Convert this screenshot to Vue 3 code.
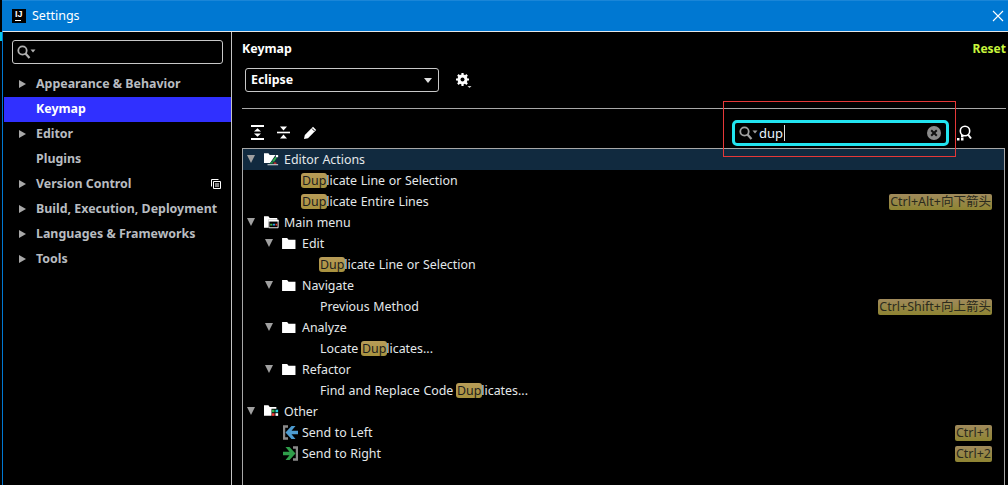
<template>
  <div class="window">
    <header class="titlebar">
      <span class="app-logo"><b>IJ</b><i></i></span>
      <span class="title">Settings</span>
      <svg class="close" width="12" height="12" viewBox="0 0 12 12"><path d="M1 1l10 10M11 1L1 11" stroke="#fff" stroke-width="1.1" fill="none" /></svg>
    </header>
    <div class="body">
      <aside class="sidebar">
        <div class="side-search">
          <svg width="19" height="15" viewBox="0 0 19 15"><circle cx="5.500" cy="5.500" r="4.200" fill="none" stroke="#b0b0b0" stroke-width="1.800" /><path d="M8.500 8.500l4 4.500" stroke="#b0b0b0" stroke-width="2.200" /><path d="M13.500 4.500h5l-2.500 3z" fill="#b0b0b0" /></svg>
        </div>
        <div v-for="item in navItems" :key="item.label" class="nav-row" :class="{ active: item.active }">
          <span class="nav-arrow" :class="{ hidden: !item.arrow }"></span>
          <span class="nav-label">{{ item.label }}</span>
          <svg v-if="item.copy" class="nav-copy" width="10" height="10" viewBox="0 0 10 10"><path d="M.5 7.500V.5h7M2.500 2.500h7v7h-7zM4 5h4M4 7h4" fill="none" stroke="#fff" /></svg>
        </div>
      </aside>
      <main class="content">
        <div class="heading">
          <span class="heading-title">Keymap</span>
          <span class="reset">Reset</span>
        </div>
        <div class="scheme">
          <div class="combo">
            <span>Eclipse</span>
            <i class="combo-arrow"></i>
          </div>
          <svg class="gear" width="17" height="17" viewBox="0 0 17 17">
            <circle cx="7.500" cy="7.500" r="3.700" fill="none" stroke="#fff" stroke-width="2.600" />
            <path d="M7.500 1v13M1 7.500h13M2.900 2.900l9.200 9.200M12.100 2.900l-9.200 9.200" stroke="#fff" stroke-width="2.200" />
            <circle cx="7.500" cy="7.500" r="2" fill="#000" />
            <path d="M12.500 14h4l-2 2z" fill="#ccc" />
          </svg>
        </div>
        <div class="separator"></div>
        <div class="toolbar">
          <div class="tools">
            <svg width="13" height="15" viewBox="0 0 13 15"><path d="M0 0h13v2H0zM0 13h13v2H0z" fill="#fff" /><path d="M6.500 3.200l3.500 3.300H3zM6.500 11.800L3 8.500h7z" fill="#fff" /></svg>
            <svg width="13" height="15" viewBox="0 0 13 15"><path d="M0 6.700h13v1.600H0z" fill="#fff" /><path d="M3 1.500h7L6.500 5.500zM3 13.500h7L6.500 9.500z" fill="#fff" /></svg>
            <svg width="15" height="15" viewBox="0 0 15 15"><path d="M1 14l.8-4L10 1.800l3.200 3.200L5 13.200z" fill="#fff" /><path d="M9 3.500l2.500 2.500" stroke="#000" /></svg>
          </div>
          <div class="search-wrap">
            <div class="filter">
              <svg width="19" height="15" viewBox="0 0 19 15"><circle cx="5.500" cy="5.500" r="4.200" fill="none" stroke="#a0a0a0" stroke-width="1.800" /><path d="M8.500 8.500l4 4.500" stroke="#a0a0a0" stroke-width="2.200" /><path d="M13.500 4.500h5l-2.500 3z" fill="#a0a0a0" /></svg>
              <span class="filter-text">dup</span><i class="caret"></i>
              <svg class="clear" width="16" height="16" viewBox="0 0 16 16"><circle cx="8" cy="8" r="7" fill="#8a8a8a" /><path d="M5.200 5.200l5.600 5.600M10.800 5.200l-5.600 5.600" stroke="#111" stroke-width="2" /></svg>
            </div>
            <svg class="find-shortcut" width="16" height="16" viewBox="0 0 16 16"><circle cx="9" cy="6" r="4.700" fill="none" stroke="#fff" stroke-width="1.600" /><path d="M12 9.500l3 4" stroke="#fff" stroke-width="2" /><path d="M5 10h2.500v2.500H5zM1 13h2.500v2.500H1zM5 13h2.500v2.500H5z" fill="#fff" /></svg>
            <div class="annotation"></div>
          </div>
        </div>
        <div class="tree">
          <div v-for="row in rows" :key="row.id" class="tree-row" :class="[`indent-${row.indent}`, { selected: row.selected }]">
            <span class="tree-arrow" :class="{ hidden: !row.arrow }"></span>
            <svg v-if="row.icon === 'folder'" class="tree-icon" width="14" height="12" viewBox="0 0 15 13"><path d="M0 1h5.500l1.500 2h7.500v10H0z" fill="#fff" /></svg>
            <svg v-else-if="row.icon === 'editor'" class="tree-icon" width="15" height="14" viewBox="0 0 17 15"><path d="M0 1h5l1.500 2H13l-4 6-2 3H0z" fill="#fff" /><path d="M4 14h12" stroke="#fff" stroke-width="1" /><path d="M6 12.500h4v-2l-2 .500z" fill="#1c9c3c" /><path d="M9 10l4-5 1.500 1-3 4.500z" fill="#2fb24c" /><path d="M11 11.500h3v1.500h-3z" fill="#e5352b" /><path d="M13.500 3h2.500v2.500h-2.500z" fill="#fff" /></svg>
            <svg v-else-if="row.icon === 'menu'" class="tree-icon" width="15" height="14" viewBox="0 0 17 15"><path d="M0 1h5l1.500 2H15v2H5v9H0z" fill="#fff" /><path d="M5.500 5.500h10.500v8.500H5.500z" fill="#000" stroke="#fff" /><path d="M5 5h11.500v2H5z" fill="#fff" /><path d="M7 9.500h2.500v2H7z" fill="#3bb34a" /><path d="M10 9.500h2.500v2H10z" fill="#2a9ff0" /><path d="M13 9.500h2v2h-2z" fill="#e5352b" /></svg>
            <svg v-else-if="row.icon === 'other'" class="tree-icon" width="15" height="14" viewBox="0 0 17 15"><path d="M0 1h5l1.500 2H14v2H8.500v8H0z" fill="#fff" /><path d="M9 6h3v3H9z" fill="#2fb24c" /><path d="M13 6h3v3h-3z" fill="#2ad4e0" /><path d="M9 10h3v3H9z" fill="#f03a3a" /><path d="M13 10h3v3h-3z" fill="#fff" /></svg>
            <svg v-else-if="row.icon === 'left'" class="tree-icon" width="15" height="15" viewBox="0 0 15 15"><path d="M5 1.500H1v12h4" fill="none" stroke="#8a8a8a" stroke-width="2.400" /><path d="M8.500 1L2.500 7.500l6 6.500h4L8.500 9.200H15V5.800H8.500l4-4.800z" fill="#4d9bd0" /></svg>
            <svg v-else-if="row.icon === 'right'" class="tree-icon" width="15" height="15" viewBox="0 0 15 15"><path d="M10 1.500h4v12h-4" fill="none" stroke="#8a8a8a" stroke-width="2.400" /><path d="M6.500 1l6 6.500-6 6.500h-4l4-4.800H0V5.800h6.500l-4-4.800z" fill="#2f9e4a" /></svg>
            <span class="tree-label"><template v-for="(part, i) in row.parts" :key="i"><mark v-if="part.hit">{{ part.text }}</mark><template v-else>{{ part.text }}</template></template></span>
            <span v-if="row.shortcut" class="shortcut">{{ row.shortcut }}</span>
          </div>
        </div>
      </main>
    </div>
  </div>
</template>

<script setup>
const navItems = [
  { label: 'Appearance & Behavior', arrow: true },
  { label: 'Keymap', active: true },
  { label: 'Editor', arrow: true },
  { label: 'Plugins' },
  { label: 'Version Control', arrow: true, copy: true },
  { label: 'Build, Execution, Deployment', arrow: true },
  { label: 'Languages & Frameworks', arrow: true },
  { label: 'Tools', arrow: true },
]

// split the label around the search hit
function split(label) {
  const at = label.toLowerCase().indexOf('dup')
  if (at < 0) return [{ text: label }]
  return [
    { text: label.slice(0, at) },
    { text: label.slice(at, at + 3), hit: true },
    { text: label.slice(at + 3) },
  ]
}

const rows = [
  { label: 'Editor Actions', indent: 0, arrow: true, icon: 'editor', selected: true },
  { label: 'Duplicate Line or Selection', indent: 2 },
  { label: 'Duplicate Entire Lines', indent: 2, shortcut: 'Ctrl+Alt+向下箭头' },
  { label: 'Main menu', indent: 0, arrow: true, icon: 'menu' },
  { label: 'Edit', indent: 1, arrow: true, icon: 'folder' },
  { label: 'Duplicate Line or Selection', indent: 3 },
  { label: 'Navigate', indent: 1, arrow: true, icon: 'folder' },
  { label: 'Previous Method', indent: 3, shortcut: 'Ctrl+Shift+向上箭头' },
  { label: 'Analyze', indent: 1, arrow: true, icon: 'folder' },
  { label: 'Locate Duplicates...', indent: 3 },
  { label: 'Refactor', indent: 1, arrow: true, icon: 'folder' },
  { label: 'Find and Replace Code Duplicates...', indent: 3 },
  { label: 'Other', indent: 0, arrow: true, icon: 'other' },
  { label: 'Send to Left', indent: 4, icon: 'left', shortcut: 'Ctrl+1' },
  { label: 'Send to Right', indent: 4, icon: 'right', shortcut: 'Ctrl+2' },
].map((row, id) => ({ ...row, id, parts: split(row.label) }))
</script>

<style>
html, body { background: #000; overflow: hidden; }
</style>

<style scoped>
.window {
  width: 1008px; height: 485px; overflow: hidden; box-sizing: border-box;
  padding-left: 2px;
  display: flex; flex-direction: column;
  background: #000 linear-gradient(#08c8e8, #08c8e8) 0 32px / 2px 9px no-repeat;
  color: #fff;
  font-family: "Noto Sans", "Noto Sans CJK SC", sans-serif;
  font-size: 12.4px;
}
.titlebar {
  flex: none; height: 31px; box-sizing: border-box;
  display: flex; align-items: center;
  padding: 0 4px 0 10px;
  background: #0078d2;
  border-top: 1px solid #1a86d8;
}
.app-logo {
  width: 14px; height: 14px; background: #000; box-sizing: border-box;
  display: flex; flex-direction: column; align-items: flex-start;
  padding: 1px 0 0 3px;
  color: #fff;
}
.app-logo b { font: bold 9px/9px "Liberation Sans", sans-serif; }
.app-logo i { width: 6px; height: 1px; background: #fff; margin-top: 1px; }
.title { margin-left: 6px; color: #fff; font-size: 12.5px; padding-bottom: 1px; }
.close { margin-left: auto; }

.body {
  flex: 1; min-height: 0; display: flex;
  border-top: 1px solid #e6e6e6;
  border-left: 1px solid #0078d2;
}
.sidebar {
  flex: none; width: 229px; box-sizing: border-box; padding-left: 1px;
  border-right: 1px solid #c4c4c4;
}
.side-search {
  margin: 8px 8px 8px 8px; height: 24px; box-sizing: border-box;
  border: 1px solid #c8c8c8; border-radius: 3px;
  display: flex; align-items: center; padding-left: 4px;
}
.nav-row {
  height: 25px; box-sizing: border-box; padding-bottom: 2px;
  display: flex; align-items: center; white-space: nowrap;
  padding-left: 15px; padding-right: 10px;
  font-weight: 700; color: #b8bcc0;
}
.nav-row.active { background: #3030ff; color: #fff; }
.nav-arrow {
  width: 0; height: 0; margin-right: 10px; flex: none;
  border-left: 7px solid #a8a8a8;
  border-top: 4.500px solid transparent; border-bottom: 4.500px solid transparent;
}
.nav-arrow.hidden { visibility: hidden; }
.nav-copy { margin-left: auto; }

.content {
  flex: 1; min-width: 0; padding: 0 2px 0 10px;
  display: flex; flex-direction: column;
}
.heading {
  height: 30px; padding-top: 2px; box-sizing: border-box;
  display: flex; align-items: center; justify-content: space-between;
  font-weight: 700;
}
.reset { color: #c8f53c; font-size: 12px; }
.scheme { display: flex; align-items: center; height: 24px; margin-top: 6px; padding-left: 3px; }
.combo {
  width: 194px; height: 24px; box-sizing: border-box;
  border: 1px solid #c8c8c8; border-radius: 3px;
  display: flex; align-items: center; justify-content: space-between;
  padding: 0 6px 2px 5px; font-weight: 700;
}
.combo-arrow {
  width: 0; height: 0; margin-top: 2px;
  border-top: 5px solid #e0e0e0;
  border-left: 4.500px solid transparent; border-right: 4.500px solid transparent;
}
.gear { margin-left: 16px; }
.separator { height: 1px; background: #a8a8a8; margin-top: 16px; }
.toolbar {
  height: 39px; box-sizing: border-box; padding-top: 7px;
  display: flex; align-items: center; justify-content: space-between;
}
.tools { display: flex; gap: 13px; padding-left: 9px; align-items: center; }
.search-wrap { display: flex; align-items: center; position: relative; margin-right: 34px; margin-top: 2px; }
.filter {
  width: 217px; height: 26px; box-sizing: border-box;
  border: 3px solid #22e4f0; border-radius: 5px;
  display: flex; align-items: center; padding: 0 4px 0 4px;
  background: #000;
}
.filter-text { margin-left: 1px; color: #e8f4ff; font-size: 13px; }
.caret { width: 1px; height: 16px; background: #ddd; margin-left: 1px; }
.clear { margin-left: auto; }
.find-shortcut { margin-left: 7px; }
.annotation {
  position: absolute; left: -9px; top: -19px;
  width: 231px; height: 54px; border: 1px solid #e53838;
  pointer-events: none;
}

.tree {
  flex: 1; border-top: 1px solid #a8a8a8; border-left: 1px solid #a8a8a8; border-right: 1px solid #a8a8a8;
  margin-right: 1px;
}
.tree-row {
  height: 21px; box-sizing: border-box; padding-bottom: 1px;
  display: flex; align-items: center; padding-right: 12px;
  color: #e4e8ea; white-space: nowrap; word-spacing: .4px;
}
.tree-row.selected { background: #112a3f; }
.indent-0 { padding-left: 4px; }
.indent-1 { padding-left: 22px; }
.indent-2 { padding-left: 59px; }
.indent-3 { padding-left: 77px; }
.indent-4 { padding-left: 40px; }
.indent-2 .tree-arrow, .indent-3 .tree-arrow, .indent-4 .tree-arrow { display: none; }
.tree-arrow {
  width: 0; height: 0; flex: none;
  border-top: 8px solid #a0a0a0;
  border-left: 4.500px solid transparent; border-right: 4.500px solid transparent;
  margin-right: 9px;
}
.tree-arrow.hidden { visibility: hidden; }
.tree-icon { flex: none; margin-right: 5px; }
.indent-1 .tree-icon { margin-right: 6px; }
.indent-4 .tree-icon { margin-right: 4px; }
.tree-label { flex: none; }
mark {
  background: linear-gradient(#b89c58, #a8923e); color: #1d1d1d; border-radius: 3px;
  display: inline-block; line-height: 15px;
  padding: 0 1px; margin: 0 -1px;
}
.shortcut {
  margin-left: auto; margin-top: 2px; height: 16px; line-height: 16px; padding: 0 1px;
  background: linear-gradient(#a08a5c, #8e8432);
  color: #2b2b1d; border-radius: 2px; font-size: 12.5px;
}
</style>
